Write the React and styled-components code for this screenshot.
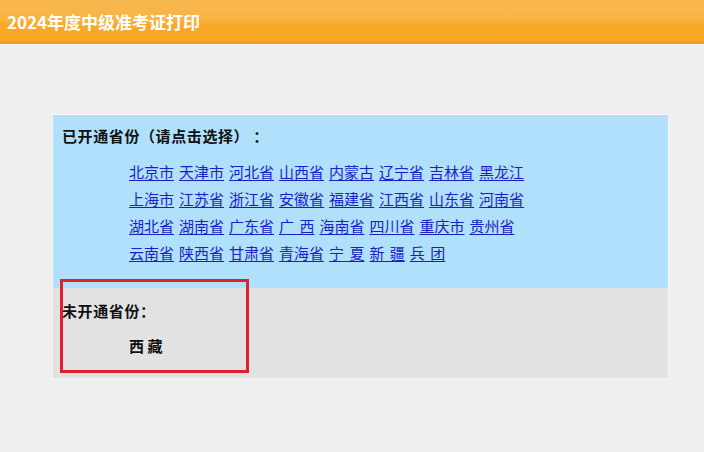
import styled, { createGlobalStyle } from "styled-components";

const GlobalStyle = createGlobalStyle`
  html, body {
    margin: 0;
    padding: 0;
    background: #efefef;
    font-family: "Noto Sans CJK SC", "Noto Sans", sans-serif;
  }
`;

const openProvinces = [
  "北京市", "天津市", "河北省", "山西省", "内蒙古", "辽宁省", "吉林省", "黑龙江",
  "上海市", "江苏省", "浙江省", "安徽省", "福建省", "江西省", "山东省", "河南省",
  "湖北省", "湖南省", "广东省", "广 西", "海南省", "四川省", "重庆市", "贵州省",
  "云南省", "陕西省", "甘肃省", "青海省", "宁 夏", "新 疆", "兵 团",
];

const App = () => {
  return (
    <Page>
      <GlobalStyle />
      <Header>
        <Title>2024年度中级准考证打印</Title>
      </Header>
      <Main>
        <Panel>
          <OpenSection>
            <Label>已开通省份（请点击选择） ：</Label>
            <LinkList>
              {openProvinces.map((name) => (
                <ProvinceLink key={name} href="#">
                  {name}
                </ProvinceLink>
              ))}
            </LinkList>
          </OpenSection>
          <ClosedSection>
            <Label>未开通省份：</Label>
            <ClosedName>西 藏</ClosedName>
            <Highlight />
          </ClosedSection>
        </Panel>
      </Main>
    </Page>
  );
};

const Page = styled.div`
  min-height: 452px;
  background: #efefef;
`;

const Header = styled.header`
  height: 42px;
  display: flex;
  align-items: center;
  padding: 0 7px;
  background: linear-gradient(to bottom, #f9b84f 0%, #f8b444 45%, #f7a928 60%, #f6a623 100%);
  border-bottom: 2px solid #ef9c1e;
  box-shadow: 0 1px 0 #f8f8f8;
`;

const Title = styled.h1`
  margin: 0;
  font-size: 17px;
  font-weight: 700;
  color: #ffffff;
`;

const Main = styled.main`
  padding: 71px 36px 0 53px;
`;

const Panel = styled.div`
  width: 615px;
  box-shadow: 0 0 0 1px #f6f6f6;
`;

const OpenSection = styled.section`
  background: #b0e0fc;
  padding: 11px 9px 22px;
`;

const Label = styled.div`
  font-size: 15px;
  line-height: 20px;
  font-weight: 700;
  letter-spacing: 0.6px;
  color: #111;
  white-space: pre;
`;

const LinkList = styled.div`
  width: 404px;
  margin: 12px 0 0 67px;
  display: flex;
  flex-wrap: wrap;
  column-gap: 5px;
  line-height: 27px;
`;

const ProvinceLink = styled.a`
  font-size: 15px;
  color: #1a1fc6;
  text-decoration: underline;
  text-underline-offset: 2px;
  white-space: pre;
  word-spacing: 2px;
`;

const ClosedSection = styled.section`
  position: relative;
  background: #e2e2e2;
  padding: 13px 9px 22px;
`;

const ClosedName = styled.div`
  margin: 15px 0 0 67px;
  font-size: 15px;
  line-height: 20px;
  font-weight: 700;
  color: #111;
  white-space: pre;
`;

const Highlight = styled.div`
  position: absolute;
  left: 7px;
  top: -9px;
  width: 183px;
  height: 88px;
  border: 3px solid #e0202e;
  pointer-events: none;
`;

export default App;
